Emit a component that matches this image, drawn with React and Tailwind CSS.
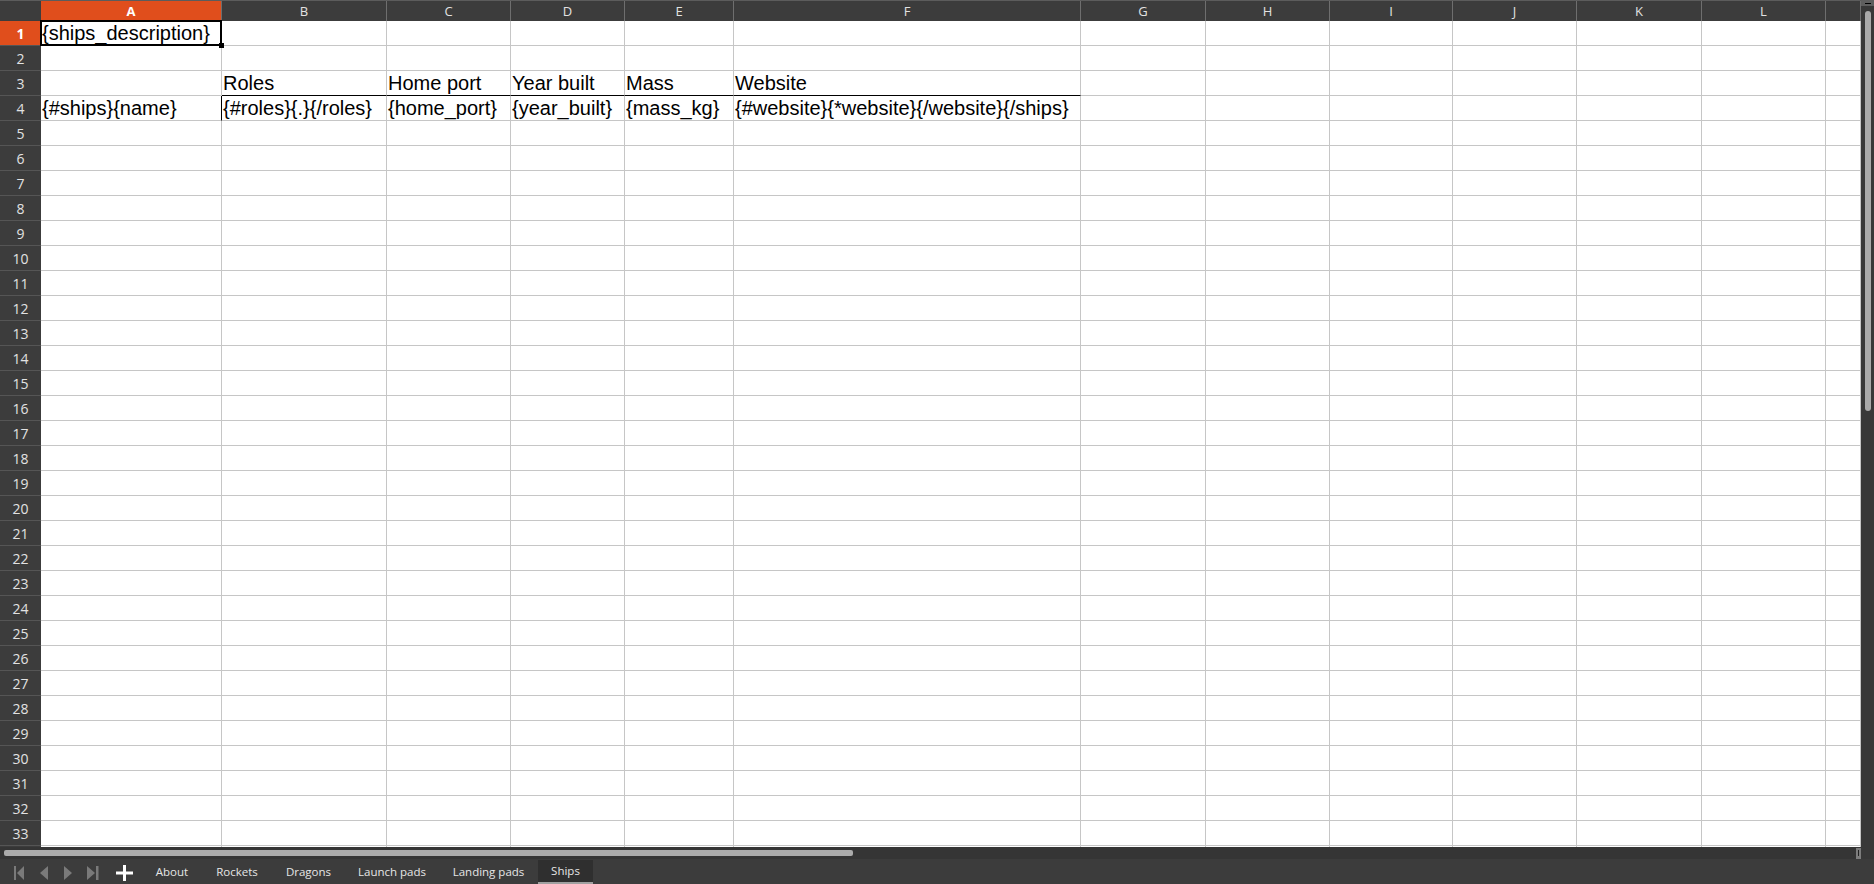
import React from "react";

const COLS = [
  { l: "A", w: "w-[181px]" },
  { l: "B", w: "w-[165px]" },
  { l: "C", w: "w-[124px]" },
  { l: "D", w: "w-[114px]" },
  { l: "E", w: "w-[109px]" },
  { l: "F", w: "w-[347px]" },
  { l: "G", w: "w-[125px]" },
  { l: "H", w: "w-[124px]" },
  { l: "I", w: "w-[123px]" },
  { l: "J", w: "w-[124px]" },
  { l: "K", w: "w-[125px]" },
  { l: "L", w: "w-[124px]" },
  { l: "", w: "flex-1" },
];

const DATA = {
  1: { 0: "{ships_description}" },
  3: { 1: "Roles", 2: "Home port", 3: "Year built", 4: "Mass", 5: "Website" },
  4: {
    0: "{#ships}{name}",
    1: "{#roles}{.}{/roles}",
    2: "{home_port}",
    3: "{year_built}",
    4: "{mass_kg}",
    5: "{#website}{*website}{/website}{/ships}",
  },
};

const TABS = [
  { name: "About", w: "w-[60px]" },
  { name: "Rockets", w: "w-[70px]" },
  { name: "Dragons", w: "w-[73px]" },
  { name: "Launch pads", w: "w-[94px]" },
  { name: "Landing pads", w: "w-[99px]" },
  { name: "Ships", w: "w-[55px]", active: true },
];

function Cell({ col, row }) {
  const text = DATA[row] && DATA[row][col];
  const blackBottom = row === 3 && col >= 1 && col <= 5;
  const blackRight = row === 4 && col === 0;
  const selected = row === 1 && col === 0;
  return (
    <div
      className={`relative shrink-0 h-[25px] border-r border-b border-[#c6c6c6] ${
        blackBottom ? "border-b-black" : ""
      } ${blackRight ? "border-r-black" : ""} ${COLS[col].w} flex items-end pl-[1px] whitespace-nowrap text-[20px] leading-[23px] text-black bg-white`}
    >
      {text ? <span className="relative z-10">{text}</span> : null}
      {selected ? (
        <>
          <div className="absolute -left-[1px] -top-[1px] right-[-1px] bottom-[-1px] border-2 border-black z-20 pointer-events-none" />
          <div className="absolute right-[-3px] bottom-[-3px] w-[5px] h-[5px] bg-black z-30" />
        </>
      ) : null}
    </div>
  );
}

function RowHeader({ n, label }) {
  const sel = n === 1;
  return (
    <div
      className={`w-[41px] shrink-0 h-[25px] border-b border-[#555555] flex items-center justify-center text-[14px] font-['Open_Sans',sans-serif] ${
        sel ? "bg-[#e04e1c] text-white font-bold" : "bg-[#3c3c3c] text-[#e2e2e2]"
      }`}
    >
      {label ? n : null}
    </div>
  );
}

export default function App() {
  const rows = Array.from({ length: 34 }, (_, i) => i + 1);
  return (
    <div className="w-[1874px] h-[884px] overflow-hidden bg-[#3c3c3c] flex flex-col font-['Open_Sans',sans-serif]">
      <div className="flex h-[859px]">
        <div className="flex-1 flex flex-col min-w-0">
          {/* grid */}
          <div className="h-[847px] overflow-hidden flex flex-col bg-white font-['Liberation_Sans',Arial,sans-serif]">
            {/* column header */}
            <div className="flex h-[21px] shrink-0 border-t border-[#5c5c5c] bg-[#3c3c3c] font-['Open_Sans',sans-serif]">
              <div className="w-[41px] shrink-0" />
              {COLS.map((c, i) => (
                <div
                  key={i}
                  className={`${c.w} shrink-0 border-r border-[#6e6e6e] flex items-center justify-center text-[13px] leading-none ${
                    i === 0 ? "bg-[#e04e1c] text-white font-bold" : "text-[#e2e2e2]"
                  }`}
                >
                  {c.l}
                </div>
              ))}
            </div>
            {rows.map((r) => (
              <div key={r} className="flex shrink-0 h-[25px]">
                <RowHeader n={r} label={r <= 33} />
                {COLS.map((c, i) => (
                  <Cell key={i} col={i} row={r} />
                ))}
              </div>
            ))}
          </div>
          {/* horizontal scrollbar */}
          <div className="h-[12px] bg-[#353535] flex items-center pl-[4px]">
            <div className="w-[849px] h-[6px] rounded-[2px] bg-[#ababab]" />
            <div className="flex-1" />
            <div className="w-[5px] h-[11px] bg-[#7d7d7d] flex items-center justify-center">
              <div className="w-[1px] h-[6px] bg-[#222]" />
            </div>
          </div>
        </div>
        {/* vertical scrollbar */}
        <div className="w-[13px] bg-[#383838] flex flex-col items-center">
          <div className="w-full h-[6px] bg-[#5e5e5e] flex items-center justify-center">
            <div className="w-[6px] h-[1px] bg-black" />
          </div>
          <div className="mt-[5px] w-[6px] h-[400px] rounded-full bg-[#a9a9a9]" />
        </div>
      </div>
      {/* tab bar */}
      <div className="h-[25px] flex items-stretch bg-[#3c3c3c]">
        <svg width="142" height="25" viewBox="0 0 142 25" className="shrink-0">
          <g fill="#7a7a7a">
            <rect x="14" y="7" width="2" height="14" />
            <polygon points="24,7 17,14 24,21" />
            <polygon points="48,7 40,14 48,21" />
            <polygon points="64,7 72,14 64,21" />
            <polygon points="87,7 95,14 87,21" />
            <rect x="96" y="7" width="2.5" height="14" />
          </g>
          <g fill="#ffffff">
            <rect x="116" y="12.5" width="17" height="3" />
            <rect x="123" y="6" width="3" height="16" />
          </g>
        </svg>
        {TABS.map((t) => (
          <div
            key={t.name}
            className={`${t.w} shrink-0 flex items-center justify-center text-[11.5px] text-[#e6e6e6] whitespace-nowrap ${
              t.active ? "bg-[#2f2f2f] border-b-2 border-[#a0a0a0] mt-[1px]" : ""
            }`}
          >
            {t.name}
          </div>
        ))}
      </div>
    </div>
  );
}
